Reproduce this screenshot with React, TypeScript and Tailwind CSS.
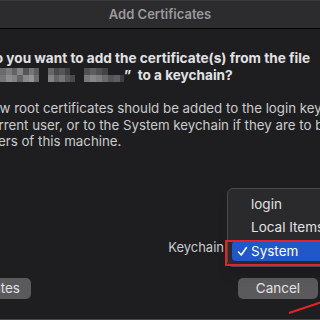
import React from 'react';

const mosaic: [number, number, number, string][] = [
  // x, y, w, color
  [0, 0, 6, '#6a6a6c'], [6, 0, 6, '#7c7c7e'], [12, 0, 5, '#626264'], [17, 0, 6, '#858587'], [23, 0, 6, '#555557'], [29, 0, 5, '#767678'], [34, 0, 5, '#5e5e60'],
  [0, 7, 6, '#767678'], [6, 7, 6, '#8c8c8e'], [12, 7, 5, '#828284'], [17, 7, 6, '#646466'], [23, 7, 6, '#88888a'], [29, 7, 5, '#949496'], [34, 7, 5, '#6c6c6e'],
  [48, 0, 6, '#666668'], [54, 0, 5, '#4a4a4c'], [59, 0, 6, '#555557'], [65, 0, 5, '#414143'],
  [48, 7, 6, '#828284'], [54, 7, 5, '#646466'], [59, 7, 6, '#747476'], [65, 7, 5, '#58585a'], [70, 7, 5, '#4a4a4c'],
  [84, 0, 6, '#505052'], [90, 0, 6, '#5e5e60'], [96, 0, 6, '#505052'], [102, 0, 6, '#434345'],
  [84, 7, 6, '#78787a'], [90, 7, 6, '#868688'], [96, 7, 6, '#7c7c7e'], [102, 7, 6, '#6a6a6c'], [108, 7, 6, '#555557'], [114, 7, 6, '#5e5e60'], [120, 7, 4, '#3e3e40'],
];

function Blurred() {
  return (
    <svg width="124" height="14" viewBox="0 0 124 14" className="inline-block align-[-2px]">
      {mosaic.map(([x, y, w, c], i) => (
        <rect key={i} x={x} y={y} width={w} height={7} fill={c} />
      ))}
    </svg>
  );
}

export default function App() {
  return (
    <div
      className="relative w-[320px] h-[320px] overflow-hidden bg-[#1e1e20] flex flex-col border-b border-[#4a4a4c]"
      style={{ fontFamily: 'Inter, "Noto Sans", sans-serif' }}
    >
      <div className="h-[29px] shrink-0 bg-[#2c2c2e] border-t border-[#3a3a3c] border-b border-b-black flex items-center justify-center">
        <span className="text-[13px] font-semibold text-[#9a9a9c]">Add Certificates</span>
      </div>

      <div className="ml-[-15px] pt-[21px] whitespace-nowrap shrink-0">
        <p className="text-[13.6px] leading-[17px] font-bold text-[#e2e2e4]">
          Do you want to add the certificate(s) from the file
          <br />
          <span className="ml-[15px]" />
          <Blurred />”&nbsp; to a keychain?
        </p>
        <p className="ml-[-3px] mt-[16px] text-[13.3px] leading-[16.5px] text-[#cbcbcd]">
          New root certificates should be added to the login keychain for the
          <br />
          <span className="ml-[1px]" />current user, or to the System keychain if they are to be trusted by all
          <br />
          <span className="ml-[1px]" />users of this machine.
        </p>
      </div>

      <div className="mt-[90px] h-[16px] shrink-0 flex items-center justify-end pr-[96px]">
        <span className="text-[13px] text-[#cbcbcd]">Keychain</span>
      </div>

      <div className="mt-[22px] shrink-0 flex items-center justify-between whitespace-nowrap">
        <div className="ml-[-90px] h-[21px] w-[121px] rounded-[5px] bg-[#5a5a5c] flex items-center justify-end pr-[11px] text-[13.5px] text-[#e2e2e4]">
          View Certificates
        </div>
        <div className="mr-[2px] h-[21px] w-[80px] rounded-[5px] bg-[#5a5a5c] flex items-center justify-center text-[13.5px] text-[#e2e2e4]">
          Cancel
        </div>
      </div>

      <div className="absolute left-[227px] top-[188px] w-[110px] h-[79px] rounded-[6px] border border-[#4a4a4c] bg-[#2a2a2c] py-[4px] pl-[4px] text-[13.5px] text-[#e2e2e4] shadow-lg whitespace-nowrap">
        <div className="h-[23px] flex items-center pl-[19px]">login</div>
        <div className="h-[23px] flex items-center pl-[19px]">Local Items</div>
        <div className="h-[20px] mt-[2px] flex items-center rounded-[4px] bg-[#2157c6] text-white">
          <svg width="11" height="11" viewBox="0 0 11 11" className="ml-[5px] mr-[3px]">
            <path d="M1.5 6 L4.2 9 L9.5 1.5" fill="none" stroke="white" strokeWidth="1.6" strokeLinecap="round" strokeLinejoin="round" />
          </svg>
          System
        </div>
      </div>

      <div className="absolute left-[225px] top-[240px] w-[110px] h-[26px] border-2 border-[#e0242a]" />

      <svg className="absolute left-0 top-0" width="320" height="320" viewBox="0 0 320 320">
        <line x1="289" y1="313" x2="322" y2="302" stroke="#e0242a" strokeWidth="2" />
      </svg>
    </div>
  );
}
